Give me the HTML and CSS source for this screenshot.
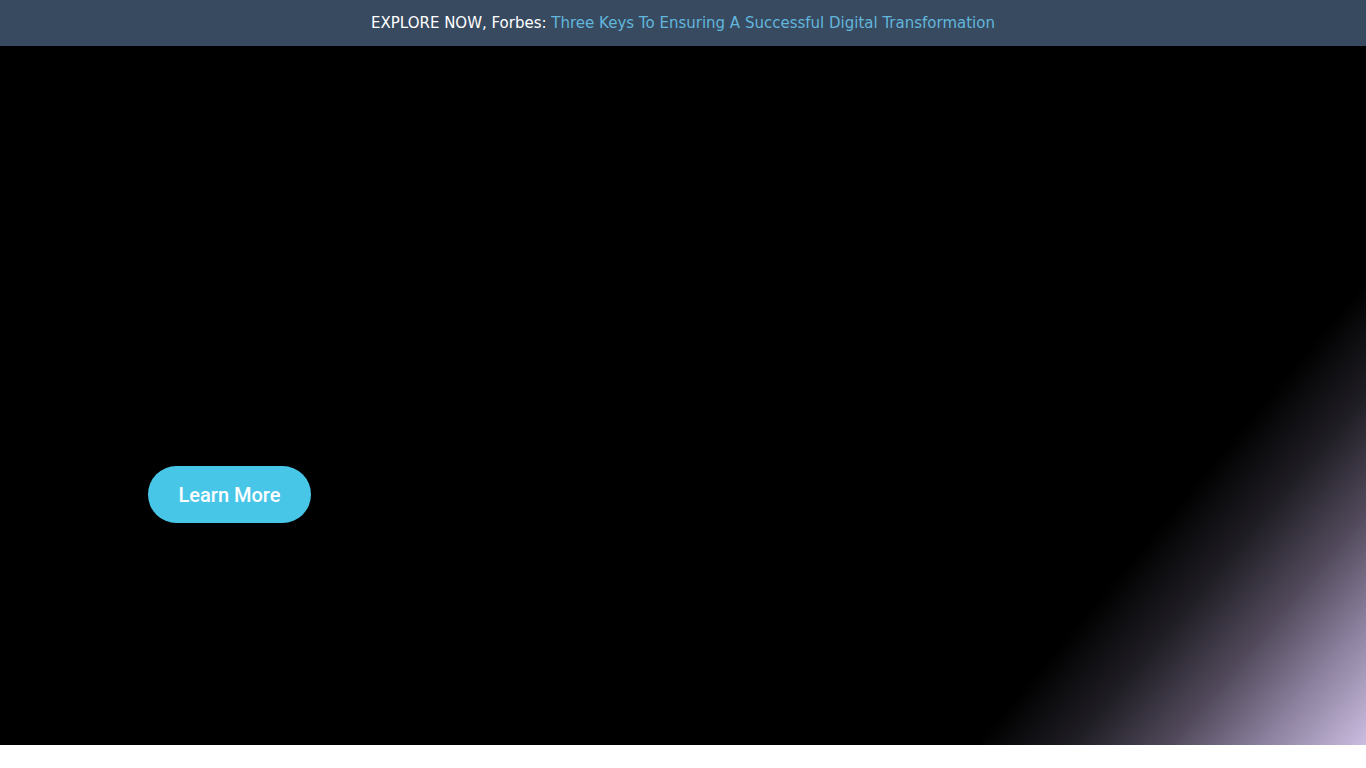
FILE: index.html
```html
<!DOCTYPE html>
<html>
<head>
<meta charset="utf-8">
<link rel="stylesheet" href="styles.css">
</head>
<body>
<div class="banner">
  <span class="banner-text">EXPLORE NOW, Forbes: <a class="banner-link" href="#">Three Keys To Ensuring A Successful Digital Transformation</a></span>
</div>
<section class="hero">
  <a class="btn" href="#">Learn More</a>
</section>
</body>
</html>
```
FILE: styles.css
```css
html, body {
  margin: 0;
  padding: 0;
  background: #ffffff;
}
.banner {
  height: 46px;
  background: #384a60;
  display: flex;
  align-items: center;
  justify-content: center;
  font-family: "DejaVu Sans", sans-serif;
  font-size: 15px;
  color: #ffffff;
}
.banner-link {
  color: #62b6dc;
  text-decoration: none;
}
.hero {
  height: 699px;
  background: linear-gradient(130deg, #000000 80%, #201e25 85%, #524a5c 90%, #8a7f9c 94.5%, #cbbde0 100%);
  display: flex;
  flex-direction: column;
  align-items: flex-start;
  padding: 420px 0 0 148px;
  box-sizing: border-box;
}
.btn {
  display: flex;
  align-items: center;
  justify-content: center;
  width: 163px;
  height: 57px;
  border-radius: 29px;
  background: #48c6e8;
  color: #ffffff;
  font-family: Roboto, sans-serif;
  font-weight: 500;
  font-size: 20px;
  text-decoration: none;
}
```
